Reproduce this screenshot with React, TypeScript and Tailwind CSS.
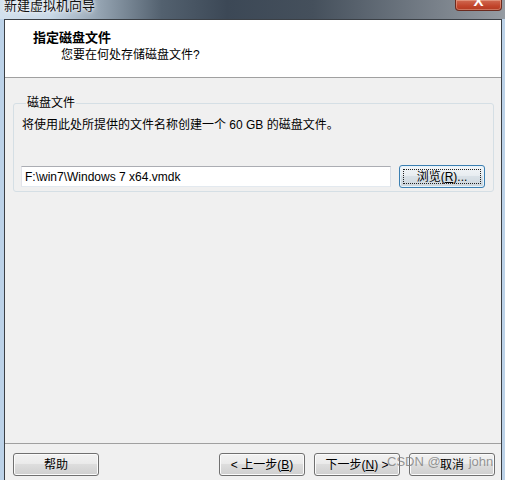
export default function App() {
  const btn =
    "w-[86px] h-[23px] border border-[#707070] rounded-[3px] bg-[linear-gradient(#f2f2f2,#ebebeb_45%,#dddddd_50%,#cfcfcf)] shadow-[inset_0_0_0_1px_#fbfbfb] flex items-center justify-center text-[12px] leading-[14px] text-black";
  return (
    <div className="w-[505px] h-[480px] overflow-hidden bg-[#bcd2e8] font-['Liberation_Sans','Noto_Sans_CJK_SC',sans-serif] text-[12px] text-black">
      {/* title bar */}
      <div className="h-[19px] flex justify-between bg-[linear-gradient(90deg,#d3e1ee_0%,#c8d8e6_10%,#93a2b0_20%,#53616f_32%,#3c4856_45%,#45505c_62%,#6b747e_80%,#969ca3_100%)]">
        <div className="pl-[4px] -mt-[2px] text-[13px] leading-[15px] text-[#111] [text-shadow:0_0_6px_#ffffff,0_0_3px_#ffffff]">
          新建虚拟机向导
        </div>
        <div className="w-[47px] h-[11px] mr-[3px] rounded-b-[4px] border border-t-0 border-[#6b2a1e] bg-[linear-gradient(#d06a52,#c2452c_60%,#b23a22)] shadow-[inset_0_0_0_1px_rgba(255,220,200,0.35)] flex justify-center overflow-hidden">
          <span className="-mt-[7px] text-[15px] leading-[16px] font-bold text-white">X</span>
        </div>
      </div>

      {/* window client */}
      <div className="ml-[4px] mr-[3px] h-[461px] border border-b-0 border-[#3b4046] flex flex-col">
        {/* header */}
        <div className="h-[58px] shrink-0 bg-white border-b border-[#a0a0a0]">
          <div className="pl-[28px] pt-[10px] text-[13px] leading-[15px] font-bold">指定磁盘文件</div>
          <div className="pl-[56px] pt-[3px] text-[12px] leading-[15px]">您要在何处存储磁盘文件?</div>
        </div>

        {/* body */}
        <div className="h-[365px] shrink-0 bg-[#f0f0f0]">
          <fieldset className="mt-[18px] mx-[8px] h-[96px] border border-[#d5dfe5] rounded-[3px] pl-[7px] pr-[8px]">
            <legend className="ml-[5px] px-[1px] text-[12px] leading-[14px]">磁盘文件</legend>
            <div className="mt-[8px] ml-[1px] text-[12px] leading-[15px]">
              将使用此处所提供的文件名称创建一个 60 GB 的磁盘文件。
            </div>
            <div className="mt-[32px] flex items-center gap-[8px]">
              <div className="w-[370px] h-[21px] bg-white border border-[#abadb3] border-l-[#e2e3ea] border-r-[#dbdfe6] border-b-[#e3e9ef] pl-[3px] flex items-center text-[12px] leading-[14px]">
                F:\win7\Windows 7 x64.vmdk
              </div>
              <div className="relative w-[86px] h-[23px] border border-[#3c7fb1] rounded-[3px] bg-[linear-gradient(#f3f6f8,#e8edf1_45%,#d9e1e7_50%,#cdd6dd)] shadow-[inset_0_0_0_1px_#e6f3fb] flex items-center justify-center text-[12px] leading-[14px]">
                <span className="absolute inset-[3px] border border-dotted border-[#222]"></span>
                <span>
                  浏览(<span className="underline">R</span>)...
                </span>
              </div>
            </div>
          </fieldset>
        </div>

        {/* footer */}
        <div className="flex-1 bg-[#f0f0f0] border-t border-[#a0a0a0] pt-[9px] pl-[8px] pr-[6px] flex items-start relative">
          <div className={btn}>帮助</div>
          <div className="flex-1"></div>
          <div className={btn}>
            &lt; 上一步(<span className="underline">B</span>)
          </div>
          <div className="w-[9px]"></div>
          <div className={btn}>
            下一步(<span className="underline">N</span>) &gt;
          </div>
          <div className="w-[9px]"></div>
          <div className={btn}>取消</div>
          <span className="absolute left-[382px] top-[10px] text-[13px] leading-[16px] text-[rgba(130,130,130,0.85)] whitespace-nowrap">
            CSDN @<span className="inline-block w-[28px]"></span>john
          </span>
        </div>
      </div>
    </div>
  );
}
